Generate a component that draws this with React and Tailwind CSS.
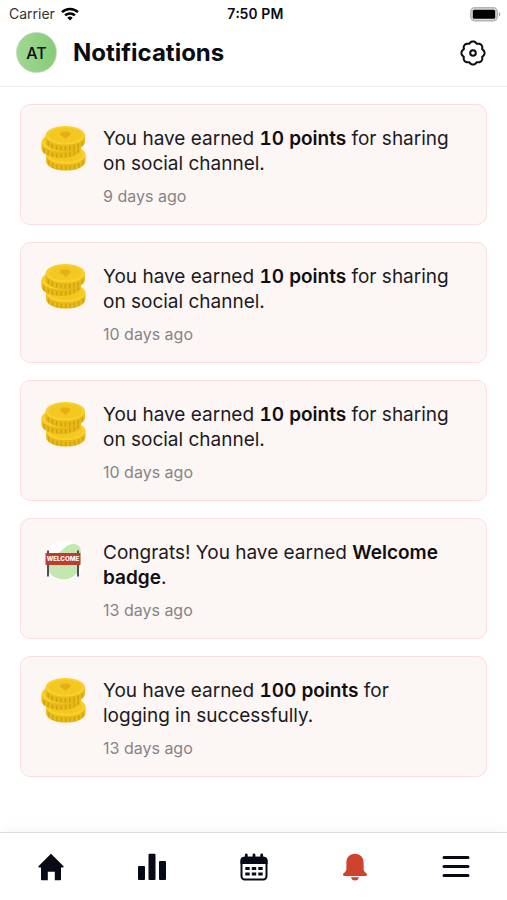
import clsx from "clsx";

const notifications = [
  { id: 1, type: "points", before: "You have earned ", highlight: "10 points", after: " for sharing on social channel.", time: "9 days ago" },
  { id: 2, type: "points", before: "You have earned ", highlight: "10 points", after: " for sharing on social channel.", time: "10 days ago" },
  { id: 3, type: "points", before: "You have earned ", highlight: "10 points", after: " for sharing on social channel.", time: "10 days ago" },
  { id: 4, type: "badge", before: "Congrats! You have earned ", highlight: "Welcome badge", after: ".", time: "13 days ago" },
  { id: 5, type: "points", before: "You have earned ", highlight: "100 points", after: " for logging in successfully.", time: "13 days ago" },
];

// scalloped outline with eight round lobes, starting from the top one
const gearPoints = Array.from({ length: 96 }, (_, i) => {
  const a = (i / 96) * Math.PI * 2;
  const r = 9.9 + 1.7 * Math.abs(Math.cos(4 * a));
  return `${(14 + r * Math.sin(a)).toFixed(2)},${(14 - r * Math.cos(a)).toFixed(2)}`;
}).join(" ");

function GearIcon() {
  return (
    <svg viewBox="0 0 28 28" className="size-7" fill="none" stroke="#0b0b12" strokeWidth="2" strokeLinejoin="round">
      <polygon points={gearPoints} />
      <circle cx="14" cy="14" r="2.8" />
    </svg>
  );
}

function WifiIcon() {
  return (
    <svg viewBox="0 0 18 14" className="w-[18px] h-[14px]" fill="none" stroke="#000" strokeWidth="2.5">
      <path d="M1 5.2a11.4 11.4 0 0 1 16 0" />
      <path d="M4.1 8.4a7 7 0 0 1 9.8 0" />
      <path d="M9 13.6 6.3 10.8a3.9 3.9 0 0 1 5.4 0Z" fill="#000" stroke="none" />
    </svg>
  );
}

function BatteryIcon() {
  return (
    <svg viewBox="0 0 31 15" className="w-[31px] h-[15px]">
      <rect x="0.8" y="0.8" width="26.4" height="13" rx="4" fill="#ddd" stroke="#b5b5b5" strokeWidth="1.5" />
      <rect x="2.8" y="2.8" width="22.4" height="9" rx="1.5" fill="#000" />
      <path d="M28.8 5v4.6c2-.8 2-3.8 0-4.6Z" fill="#a8a8a8" />
    </svg>
  );
}

function Coin({ x, y }) {
  return (
    <g transform={`translate(${x} ${y})`}>
      <path d="M-19.7 0v6.5a19.7 9.3 0 0 0 39.4 0V0Z" fill="#e9b917" />
      <path
        d="M-17 6v4.500M-13 8.500v4.500M-8.700 10v4.500M-4.400 10.700v4.500M0 11v4.500M4.400 10.700v4.500M8.700 10v4.500M13 8.500v4.500M17 6v4.500"
        stroke="#cfa012"
        strokeWidth="1.3"
      />
      <ellipse rx="19.7" ry="9.3" fill="#f8d02d" />
      <ellipse rx="16.5" ry="7.2" fill="#f5c821" />
    </g>
  );
}

function CoinsIcon() {
  return (
    <svg viewBox="0 0 48 48" className="size-12">
      <Coin x={25.8} y={29.8} />
      <Coin x={21.2} y={17.2} />
      <Coin x={25.3} y={10.3} />
      <path d="M19.500 9 22 6.500h6.500L31 9l-5.500 5Z" fill="#e2b118" />
    </svg>
  );
}

function WelcomeIcon() {
  return (
    <svg viewBox="0 0 48 48" className="size-12">
      <circle cx="24" cy="22" r="20" fill="#fff" />
      <path d="M25 8.500c4-4 12-5 15 0 2 4 0 8 .5 12C41 32 34 40.500 24 40.500 14 40.500 7 34 7 26c0-7 3-9 8-10.500 4-1.500 6-3.500 10-7Z" fill="#c3e8af" />
      <path d="M8 11.500V37.500M38 11.500V37.500" stroke="#4c5157" strokeWidth="2" />
      <rect x="5.500" y="14" width="35" height="12" rx="0.500" fill="#c03c2e" />
      <text x="23" y="22.300" textAnchor="middle" fontSize="6.200" fontWeight="800" fill="#fff" fontFamily="Inter, sans-serif">
        WELCOME
      </text>
    </svg>
  );
}

function HomeIcon() {
  return (
    <svg viewBox="0 0 28 28" className="size-7" fill="#070a14">
      <path d="M14 .8 26.300 13c.6.700.3 1.600-.6 1.600H24V26.400c0 .5-.3.800-.8.800h-5.400v-8.400h-7v8.400H4.800c-.5 0-.8-.3-.8-.8V14.600H2.300c-.9 0-1.200-.9-.6-1.600Z" />
    </svg>
  );
}

function ChartIcon() {
  return (
    <svg viewBox="0 0 28 28" className="size-7" fill="#070a14">
      <rect x="0" y="13" width="7" height="14" rx="1" />
      <rect x="10.500" y="0.800" width="7" height="26.200" rx="1" />
      <rect x="21" y="8" width="7" height="19" rx="1" />
    </svg>
  );
}

function CalendarIcon() {
  return (
    <svg viewBox="0 0 28 28" className="size-7">
      <rect x="1.500" y="4.800" width="25" height="21.700" rx="3.200" fill="#fff" stroke="#070a14" strokeWidth="2" />
      <path d="M.5 11V7.500a3.700 3.700 0 0 1 3.700-3.700h19.600a3.700 3.700 0 0 1 3.700 3.700V11Z" fill="#070a14" />
      <path d="M6.300 2v4M14 2v4M21.700 2v4" stroke="#070a14" strokeWidth="2.800" strokeLinecap="round" />
      <path d="M5.300 15.500h4.400M11.800 15.500h4.400M18.300 15.500h4.400M5.300 21h4.400M11.800 21h4.400M18.300 21h4.400" stroke="#070a14" strokeWidth="3" />
    </svg>
  );
}

function BellIcon() {
  return (
    <svg viewBox="0 0 28 28" className="size-7" fill="#cf432e">
      <path d="M14 .8c5.200 0 8.600 3.700 8.600 8.800v6.200c0 2 1 3 2.700 4.500 1.300 1.200.8 2.700-.8 2.700h-21c-1.600 0-2.100-1.500-.8-2.700 1.700-1.500 2.700-2.500 2.700-4.500V9.600C5.400 4.500 8.800.8 14 .8Z" />
      <path d="M10 24.300h8c-.3 2-2 3.300-4 3.300s-3.700-1.300-4-3.300Z" />
    </svg>
  );
}

function MenuIcon() {
  return (
    <svg viewBox="0 0 28 28" className="size-7" stroke="#070a14" strokeWidth="3" strokeLinecap="round">
      <path d="M2 4.500h24M2 13.500h24M2 22.500h24" />
    </svg>
  );
}

const tabs = [
  { name: "Home", icon: HomeIcon },
  { name: "Stats", icon: ChartIcon },
  { name: "Calendar", icon: CalendarIcon },
  { name: "Notifications", icon: BellIcon, active: true },
  { name: "Menu", icon: MenuIcon },
];

function NotificationCard({ item }) {
  return (
    <li className="flex gap-[15px] rounded-[10px] border border-[#f9dfe1] bg-[#fcf6f5] pt-5 pb-4 pl-[19px] pr-8">
      <div className="shrink-0">
        {item.type === "badge" ? <WelcomeIcon /> : <CoinsIcon />}
      </div>
      <div className="min-w-0 flex-1 pt-px">
        <p className="text-[19px] leading-[25px] text-[#1b1a1f]">
          {item.before}
          <strong className="font-semibold tabular-nums text-[#0f0e13]">{item.highlight}</strong>
          {item.after}
        </p>
        <p className="mt-2 text-base leading-6 text-[#868486]">{item.time}</p>
      </div>
    </li>
  );
}

export default function App() {
  return (
    <div className="flex min-h-screen flex-col bg-white font-['Inter',sans-serif] text-[#0b0b12]">
      <div className="grid grid-cols-3 items-center pt-1 pl-[9px] pr-[6px] text-sm leading-5">
        <div className="flex items-center gap-[6px] text-[#333]">
          <span>Carrier</span>
          <WifiIcon />
        </div>
        <span className="text-center font-semibold tabular-nums">7:50 PM</span>
        <div className="flex justify-end">
          <BatteryIcon />
        </div>
      </div>

      <header className="flex items-center gap-4 border-b border-[#ececee] px-4 pt-2 pb-[13px]">
        <div className="flex size-[41px] items-center justify-center rounded-full border border-[#c4d6bf] bg-linear-to-r from-[#a0d892] to-[#86cb77] text-base font-medium">
          AT
        </div>
        <h1 className="flex-1 text-2xl leading-8 font-bold">Notifications</h1>
        <button type="button" aria-label="Settings" className="mr-1 cursor-pointer">
          <GearIcon />
        </button>
      </header>

      <main className="flex-1 px-5 pt-[17px] pb-5">
        <ul className="flex flex-col gap-[17px]">
          {notifications.map((item) => (
            <NotificationCard key={item.id} item={item} />
          ))}
        </ul>
      </main>

      <nav className="sticky bottom-0 flex border-t border-[#dddddf] bg-white pt-5 pb-[19px] shadow-[0_-2px_12px_rgba(0,0,0,0.04)]">
        {tabs.map(({ name, icon: Icon, active }) => (
          <a
            key={name}
            href="#"
            aria-label={name}
            aria-current={active ? "page" : undefined}
            className={clsx("flex flex-1 justify-center", active && "cursor-default")}
          >
            <Icon />
          </a>
        ))}
      </nav>
    </div>
  );
}
